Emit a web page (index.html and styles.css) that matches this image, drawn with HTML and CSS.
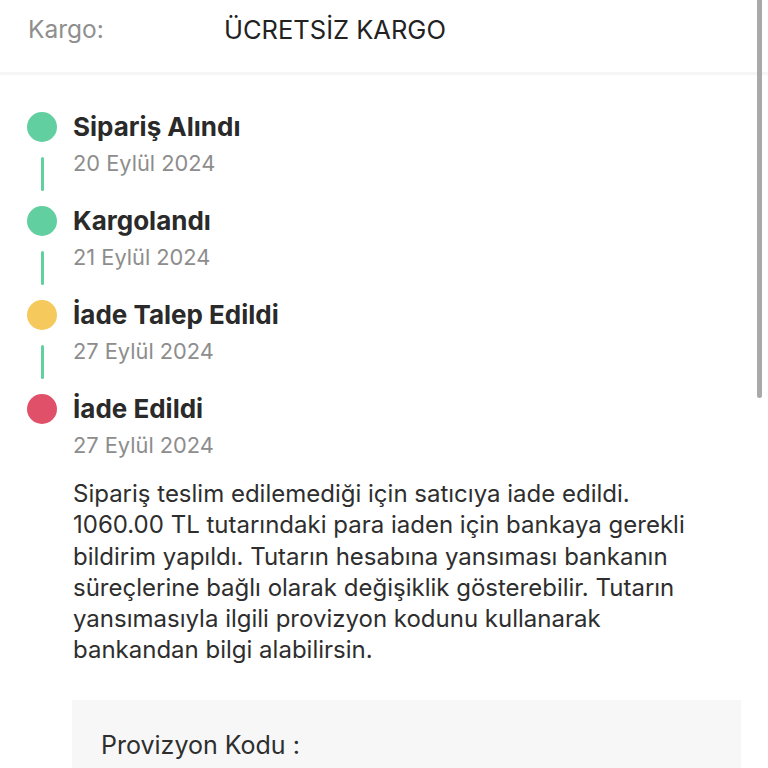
FILE: index.html
```html
<!DOCTYPE html>
<html lang="tr">
<head>
<meta charset="utf-8">
<link rel="stylesheet" href="styles.css">
</head>
<body>
<div class="page">
  <header class="cargo">
    <span class="cargo-label">Kargo:</span>
    <span class="cargo-value">ÜCRETSİZ KARGO</span>
  </header>
  <section class="timeline">
    <div class="step">
      <span class="dot green"></span>
      <span class="title">Sipariş Alındı</span>
      <span class="line"></span>
      <span class="date">20 Eylül 2024</span>
    </div>
    <div class="step">
      <span class="dot green"></span>
      <span class="title">Kargolandı</span>
      <span class="line"></span>
      <span class="date">21 Eylül 2024</span>
    </div>
    <div class="step">
      <span class="dot yellow"></span>
      <span class="title">İade Talep Edildi</span>
      <span class="line"></span>
      <span class="date">27 Eylül 2024</span>
    </div>
    <div class="step last">
      <span class="dot red"></span>
      <span class="title">İade Edildi</span>
      <span class="date">27 Eylül 2024</span>
    </div>
    <p class="note">Sipariş teslim edilemediği için satıcıya iade edildi. 1060.00 TL tutarındaki para iaden için bankaya gerekli bildirim yapıldı. Tutarın hesabına yansıması bankanın süreçlerine bağlı olarak değişiklik gösterebilir. Tutarın yansımasıyla ilgili provizyon kodunu kullanarak bankandan bilgi alabilirsin.</p>
    <div class="code-box">Provizyon Kodu :</div>
  </section>
  <div class="scrollbar"></div>
</div>
</body>
</html>
```
FILE: styles.css
```css
* { box-sizing: border-box; }
html, body { margin: 0; padding: 0; background: #fff; }
body {
  font-family: Inter, "Noto Sans", "DejaVu Sans", sans-serif;
  color: #2b2b2b;
  overflow: hidden;
  height: 768px;
}
.page { position: relative; height: 768px; }
.cargo {
  display: flex;
  align-items: center;
  height: 75px;
  padding: 0 0 14px 28px;
  border-bottom: 3px solid #f6f6f6;
}
.cargo-label { color: #8f8f8f; width: 196px; font-size: 24.5px; }
.cargo-value { color: #222; font-size: 25.5px; }
.timeline { padding: 37px 27px 0 27px; }
.step {
  display: grid;
  grid-template-columns: 30px 1fr;
  column-gap: 16px;
  margin-bottom: 15px;
}
.step.last { margin-bottom: 0; }
.dot {
  grid-column: 1; grid-row: 1;
  width: 30px; height: 30px; border-radius: 50%;
}
.green { background: #62cfa0; }
.yellow { background: #f5c95c; }
.red { background: #e05068; }
.title {
  grid-column: 2; grid-row: 1;
  font-size: 26px; font-weight: 700; line-height: 30px; color: #2a2a2a;
}
.line {
  grid-column: 1; grid-row: 2;
  justify-self: center;
  width: 3px; height: 34px; margin-top: 15px;
  background: #62cfa0; border-radius: 2px;
}
.date {
  grid-column: 2; grid-row: 2;
  align-self: start;
  margin-top: 6px;
  font-size: 21.8px; line-height: 30px; color: #8d8d8d;
}
.note {
  margin: 18px 0 0 46px;
  font-size: 24px; line-height: 31.3px; color: #2e2e2e;
  max-width: 650px;
}
.code-box {
  margin: 34px 0 0 45px;
  width: 669px;
  background: #f7f7f7;
  padding: 30px 0 40px 29px;
  font-size: 25px; line-height: 30px; color: #2e2e2e;
}
.scrollbar {
  position: absolute;
  left: 757px; top: 0;
  width: 5px; height: 398px;
  background: #a9a9a9;
  border-radius: 0 0 3px 3px;
}
```
